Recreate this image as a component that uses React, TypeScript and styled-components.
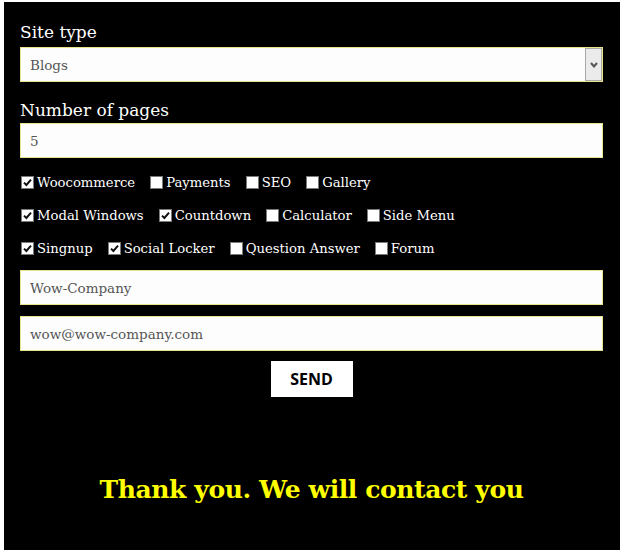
import React from "react";
import styled, { createGlobalStyle } from "styled-components";

const Global = createGlobalStyle`
  html, body { margin: 0; padding: 0; background: #ffffff; }
  body { font-family: "DejaVu Serif", serif; }
`;

const Panel = styled.form`
  box-sizing: border-box;
  margin: 2px 0 0 4px;
  width: 616px;
  height: 548px;
  background: #000000;
  padding: 19px 17px 0 16px;
  display: flex;
  flex-direction: column;
`;

const Label = styled.label<{ $top?: number }>`
  display: block;
  color: #ffffff;
  font-family: "DejaVu Serif", serif;
  font-size: 17px;
  line-height: 22px;
  margin-top: ${(p) => p.$top ?? 0}px;
`;

const fieldCss = `
  box-sizing: border-box;
  width: 100%;
  height: 35px;
  border: 1px solid #e8e48a;
  background: #fdfdfd;
  color: #555555;
  font-family: "DejaVu Serif", serif;
  font-size: 13.5px;
  padding: 0 9px;
  outline: none;
  border-radius: 0;
`;

const SelectWrap = styled.div`
  position: relative;
  margin-top: 4px;
`;

const Select = styled.select`
  ${fieldCss}
  appearance: none;
  -webkit-appearance: none;
  display: block;
`;

const ArrowBox = styled.span`
  position: absolute;
  top: 1px;
  right: 1px;
  width: 17px;
  height: 33px;
  box-sizing: border-box;
  border: 1px solid #a9a9a9;
  background: #ebebeb;
  display: flex;
  align-items: center;
  justify-content: center;
  pointer-events: none;
`;

const Input = styled.input<{ $top: number }>`
  ${fieldCss}
  display: block;
  margin-top: ${(p) => p.$top}px;
  &::placeholder { color: #555555; opacity: 1; }
`;

const Row = styled.div<{ $top: number }>`
  display: flex;
  align-items: center;
  gap: 15px;
  height: 33px;
  margin-top: ${(p) => p.$top}px;
  padding-left: 1px;
`;

const Option = styled.label`
  display: flex;
  align-items: center;
  gap: 3px;
  color: #ffffff;
  font-family: "DejaVu Serif", serif;
  font-size: 13.2px;
  white-space: nowrap;
`;

const Box = styled.span`
  box-sizing: border-box;
  width: 13px;
  height: 13px;
  background: #ffffff;
  border: 1px solid #7a7a7a;
  display: inline-flex;
  align-items: center;
  justify-content: center;
`;

const ButtonRow = styled.div`
  display: flex;
  justify-content: center;
  margin-top: 10px;
`;

const SendButton = styled.button`
  width: 82px;
  height: 36px;
  background: #ffffff;
  color: #000000;
  border: none;
  border-radius: 0;
  font-family: "Open Sans", sans-serif;
  font-weight: 700;
  font-size: 16px;
  padding: 0;
`;

const Thanks = styled.div`
  margin-top: 77px;
  text-align: center;
  color: #ffff00;
  font-family: "DejaVu Serif", serif;
  font-weight: 700;
  font-size: 25px;
  letter-spacing: -0.4px;
  line-height: 32px;
`;

const Check = ({ checked, label }: { checked: boolean; label: string }) => (
  <Option>
    <Box>
      {checked && (
        <svg width="9" height="9" viewBox="0 0 9 9">
          <path d="M1 4.6 L3.4 7 L8 1.6" fill="none" stroke="#111" strokeWidth="2" />
        </svg>
      )}
    </Box>
    {label}
  </Option>
);

const rows: [boolean, string][][] = [
  [[true, "Woocommerce"], [false, "Payments"], [false, "SEO"], [false, "Gallery"]],
  [[true, "Modal Windows"], [true, "Countdown"], [false, "Calculator"], [false, "Side Menu"]],
  [[true, "Singnup"], [true, "Social Locker"], [false, "Question Answer"], [false, "Forum"]],
];

export default function App() {
  return (
    <>
      <Global />
      <Panel onSubmit={(e) => e.preventDefault()}>
        <Label>Site type</Label>
        <SelectWrap>
          <Select defaultValue="Blogs">
            <option>Blogs</option>
            <option>Shop</option>
            <option>Portfolio</option>
          </Select>
          <ArrowBox>
            <svg width="8" height="6" viewBox="0 0 8 6">
              <path d="M1 1 L4 4.5 L7 1" fill="none" stroke="#555" strokeWidth="2" />
            </svg>
          </ArrowBox>
        </SelectWrap>
        <Label $top={17}>Number of pages</Label>
        <Input $top={2} defaultValue="5" />
        {rows.map((r, i) => (
          <Row key={i} $top={i === 0 ? 8 : 0}>
            {r.map(([c, l]) => (
              <Check key={l} checked={c} label={l} />
            ))}
          </Row>
        ))}
        <Input $top={5} placeholder="Wow-Company" />
        <Input $top={11} placeholder="wow@wow-company.com" />
        <ButtonRow>
          <SendButton type="submit">SEND</SendButton>
        </ButtonRow>
        <Thanks>Thank you. We will contact you</Thanks>
      </Panel>
    </>
  );
}
